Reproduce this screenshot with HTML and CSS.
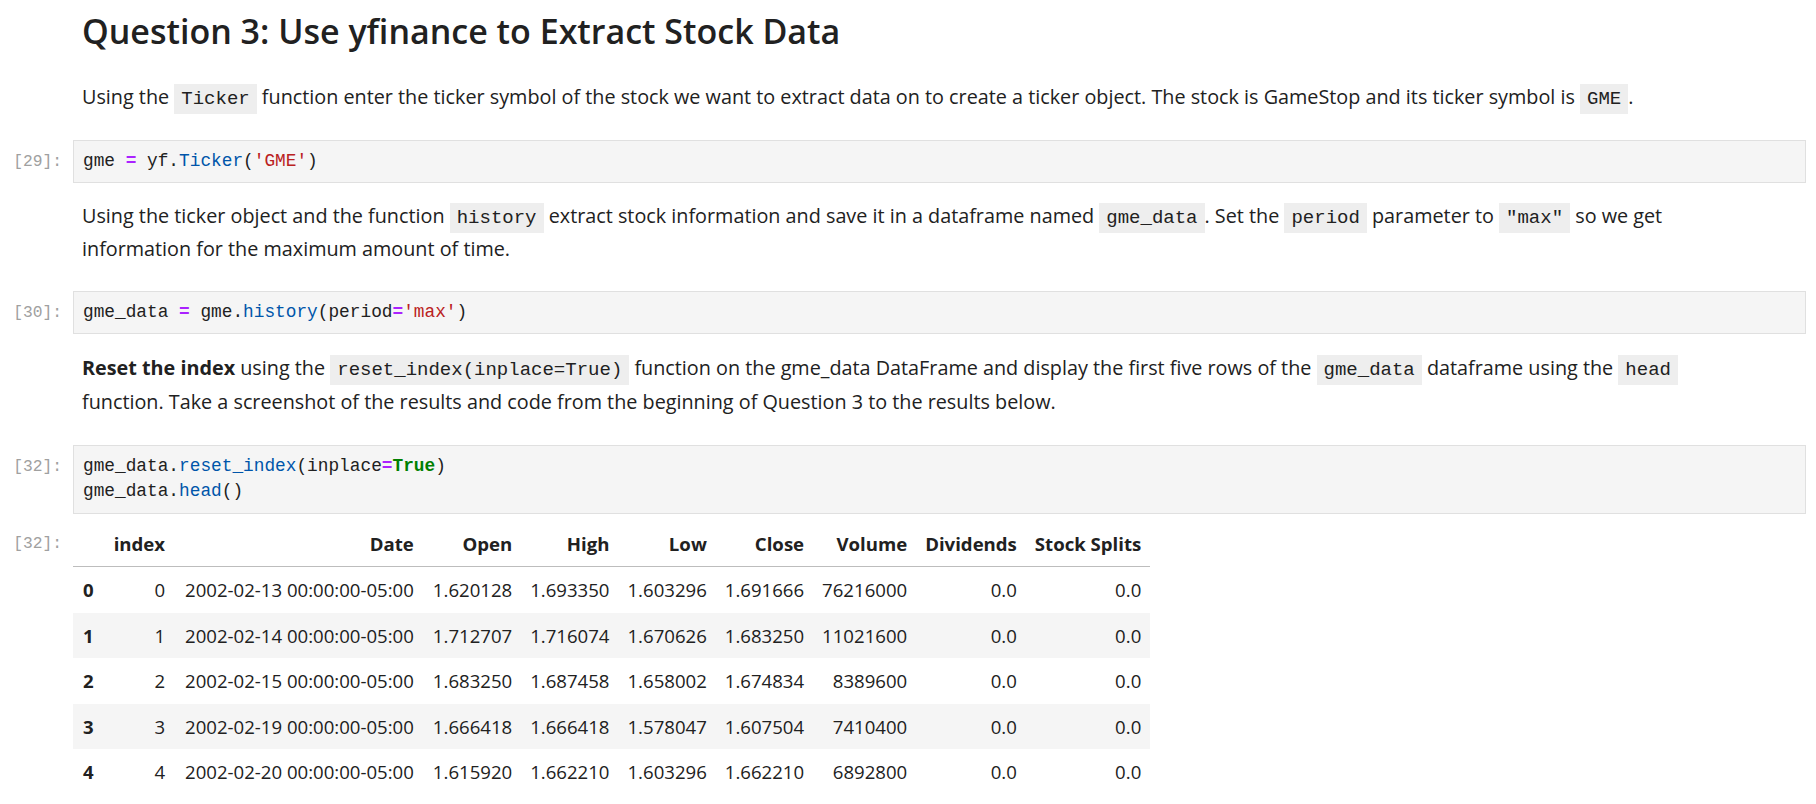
FILE: index.html
```html
<!DOCTYPE html>
<html>
<head>
<meta charset="utf-8">
<link rel="stylesheet" href="styles.css">
</head>
<body>
<div class="notebook">
  <div class="cell md-cell">
    <div class="prompt"></div>
    <div class="md">
      <h1 class="title">Question 3: Use yfinance to Extract Stock Data</h1>
      <p class="para p1">Using the <code>Ticker</code> function enter the ticker symbol of the stock we want to extract data on to create a ticker object. The stock is GameStop and its ticker symbol is <code>GME</code>.</p>
    </div>
  </div>

  <div class="cell code-cell c29">
    <div class="prompt">[29]:</div>
    <div class="editor"><span class="v">gme</span> <span class="op">=</span> yf.<span class="fn">Ticker</span>(<span class="str">'GME'</span>)</div>
  </div>

  <div class="cell md-cell">
    <div class="prompt"></div>
    <div class="md">
      <p class="para p2">Using the ticker object and the function <code>history</code> extract stock information and save it in a dataframe named <code>gme_data</code>. Set the <code>period</code> parameter to <code>"max"</code> so we get information for the maximum amount of time.</p>
    </div>
  </div>

  <div class="cell code-cell c30">
    <div class="prompt">[30]:</div>
    <div class="editor">gme_data <span class="op">=</span> gme.<span class="fn">history</span>(period<span class="op">=</span><span class="str">'max'</span>)</div>
  </div>

  <div class="cell md-cell">
    <div class="prompt"></div>
    <div class="md">
      <p class="para p3"><strong>Reset the index</strong> using the <code>reset_index(inplace=True)</code> function on the gme_data DataFrame and display the first five rows of the <code>gme_data</code> dataframe using the <code>head</code> function. Take a screenshot of the results and code from the beginning of Question 3 to the results below.</p>
    </div>
  </div>

  <div class="cell code-cell c32">
    <div class="prompt">[32]:</div>
    <div class="editor">gme_data.<span class="fn">reset_index</span>(inplace<span class="op">=</span><span class="kw">True</span>)
gme_data.<span class="fn">head</span>()</div>
  </div>

  <div class="cell out-cell">
    <div class="prompt out-prompt">[32]:</div>
    <div class="output">
      <table class="df">
        <thead>
          <tr><th></th><th>index</th><th>Date</th><th>Open</th><th>High</th><th>Low</th><th>Close</th><th>Volume</th><th>Dividends</th><th>Stock Splits</th></tr>
        </thead>
        <tbody>
          <tr><th>0</th><td>0</td><td>2002-02-13 00:00:00-05:00</td><td>1.620128</td><td>1.693350</td><td>1.603296</td><td>1.691666</td><td>76216000</td><td>0.0</td><td>0.0</td></tr>
          <tr><th>1</th><td>1</td><td>2002-02-14 00:00:00-05:00</td><td>1.712707</td><td>1.716074</td><td>1.670626</td><td>1.683250</td><td>11021600</td><td>0.0</td><td>0.0</td></tr>
          <tr><th>2</th><td>2</td><td>2002-02-15 00:00:00-05:00</td><td>1.683250</td><td>1.687458</td><td>1.658002</td><td>1.674834</td><td>8389600</td><td>0.0</td><td>0.0</td></tr>
          <tr><th>3</th><td>3</td><td>2002-02-19 00:00:00-05:00</td><td>1.666418</td><td>1.666418</td><td>1.578047</td><td>1.607504</td><td>7410400</td><td>0.0</td><td>0.0</td></tr>
          <tr><th>4</th><td>4</td><td>2002-02-20 00:00:00-05:00</td><td>1.615920</td><td>1.662210</td><td>1.603296</td><td>1.662210</td><td>6892800</td><td>0.0</td><td>0.0</td></tr>
        </tbody>
      </table>
    </div>
  </div>
</div>
</body>
</html>
```

FILE: styles.css
```css
* { box-sizing: border-box; }
html, body { margin: 0; padding: 0; background: #ffffff; }
body {
  font-family: "Open Sans", "Noto Sans", sans-serif;
  color: #212121;
  font-size: 19.8px;
}
.notebook {
  padding: 0 10px 0 0;
}
.cell {
  display: flex;
  align-items: flex-start;
}
.prompt {
  flex: 0 0 73px;
  width: 73px;
  padding-right: 11px;
  text-align: right;
  font-family: "Liberation Mono", "DejaVu Sans Mono", monospace;
  font-size: 16.3px;
  line-height: 25px;
  color: #a0a0a0;
}
.code-cell .prompt { padding-top: 9px; }
.md {
  flex: 1 1 auto;
  padding-left: 9px;
  max-width: 1659px;
}
.title {
  margin: 9px 0 0;
  font-size: 34px;
  line-height: 44px;
  font-weight: 600;
  color: #212121;
}
.para {
  margin: 0;
  line-height: 33.5px;
}
.p1 { margin-top: 27px; margin-bottom: 26px; }
.p2 { margin-top: 16px; margin-bottom: 26px; line-height: 33px; }
.p3 { margin-top: 17px; margin-bottom: 25px; line-height: 34.5px; }
.para code {
  font-family: "Liberation Mono", "DejaVu Sans Mono", monospace;
  font-size: 19px;
  line-height: 1;
  background: #eeeeee;
  padding: 4px 7px 4px;
  color: #212121;
}
.para strong { font-weight: 700; }
.editor {
  flex: 1 1 auto;
  background: #f5f5f5;
  border: 1px solid #e0e0e0;
  padding: 8px 9px;
  font-family: "Liberation Mono", "DejaVu Sans Mono", monospace;
  font-size: 17.8px;
  line-height: 25px;
  white-space: pre;
  color: #212121;
}
.c32 .editor { line-height: 25.5px; }
.op { color: #aa22ff; font-weight: 700; }
.fn { color: #0055aa; }
.str { color: #ba2121; }
.kw { color: #008000; font-weight: 700; }

.out-cell { margin-top: 7px; }
.out-prompt { padding-top: 10px; }
.output { flex: 1 1 auto; }
.df {
  border-collapse: collapse;
  font-size: 18.6px;
  color: #212121;
}
.df th, .df td {
  padding: 10px 10px;
  line-height: 25.5px;
  text-align: right;
  white-space: nowrap;
}
.df th:nth-child(n+4), .df td:nth-child(n+4) {
  padding-left: 9px;
  padding-right: 9px;
}
.df th { font-weight: 700; }
.df tbody th { text-align: left; }
.df thead tr { border-bottom: 1px solid #bdbdbd; }
.df tbody tr:nth-child(odd) { background: #ffffff; }
.df tbody tr:nth-child(even) { background: #f5f5f5; }
```
